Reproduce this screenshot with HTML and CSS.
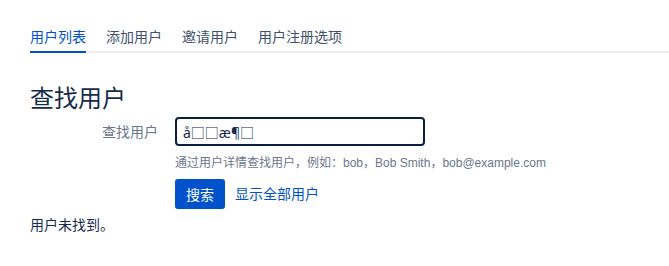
FILE: index.html
```html
<!DOCTYPE html>
<html>
<head>
<meta charset="utf-8">
<title>用户列表</title>
<link rel="stylesheet" href="styles.css">
</head>
<body>
<div class="page">
	<ul class="tabs">
		<li class="tab active">用户列表</li>
		<li class="tab">添加用户</li>
		<li class="tab">邀请用户</li>
		<li class="tab">用户注册选项</li>
	</ul>

	<h2 class="title">查找用户</h2>

	<form class="search-form">
		<label class="field-label" for="searchTerm">查找用户</label>
		<input class="text" type="text" id="searchTerm" value="å□□æ¶□">
		<div class="description">通过用户详情查找用户，例如：bob，Bob Smith，bob@example.com</div>
		<div class="buttons">
			<button type="button" class="button-primary">搜索</button>
			<a class="show-all" href="#">显示全部用户</a>
		</div>
	</form>

	<p class="no-results">用户未找到。</p>
</div>
</body>
</html>
```

FILE: styles.css
```css
body {
	margin: 0;
	background: #fff;
	color: #172b4d;
	font-family: "Noto Sans", "Noto Sans CJK SC", sans-serif;
	font-size: 14px;
	line-height: 20px;
}

.page {
	padding: 27px 0 0 30px;
}

/* tab strip */
.tabs {
	display: flex;
	gap: 20px;
	margin: 0;
	padding: 0;
	list-style: none;
	border-bottom: 2px solid #ebecf0;
}
.tab {
	padding-bottom: 4px;
	margin-bottom: -2px;
	border-bottom: 2px solid transparent;
	color: #42526e;
}
.tab.active {
	color: #0052cc;
	border-bottom-color: #0052cc;
}

.title {
	margin: 31px 0 0;
	font-size: 24px;
	font-weight: normal;
	line-height: 28px;
	color: #172b4d;
}

/* search form */
.search-form {
	display: grid;
	grid-template-columns: 130px 250px;
	column-gap: 15px;
	align-items: center;
	margin-top: 5px;
}
.field-label {
	text-align: right;
	color: #6b778c;
	padding-right: 2px;
}
.text {
	box-sizing: border-box;
	width: 250px;
	height: 29px;
	padding: 0 6px;
	border: 2px solid #091e42;
	border-radius: 4px;
	font-family: "Noto Sans", "Noto Sans CJK SC", sans-serif;
	font-size: 14px;
	color: #172b4d;
	outline: none;
}
.description {
	grid-column: 2;
	width: 420px;
	margin-top: 7px;
	font-family: "Liberation Sans", "Noto Sans CJK SC", sans-serif;
	font-size: 12px;
	line-height: 20px;
	color: #6b778c;
}
.buttons {
	grid-column: 2;
	display: flex;
	align-items: center;
	gap: 10px;
	margin-top: 6px;
}
.button-primary {
	height: 30px;
	padding: 0 11px;
	border: none;
	border-radius: 3px;
	background: #0052cc;
	color: #fff;
	font-family: "Noto Sans", "Noto Sans CJK SC", sans-serif;
	font-size: 14px;
}
.show-all {
	color: #0052cc;
	text-decoration: none;
}

.no-results {
	margin: 6px 0 0;
}
```
